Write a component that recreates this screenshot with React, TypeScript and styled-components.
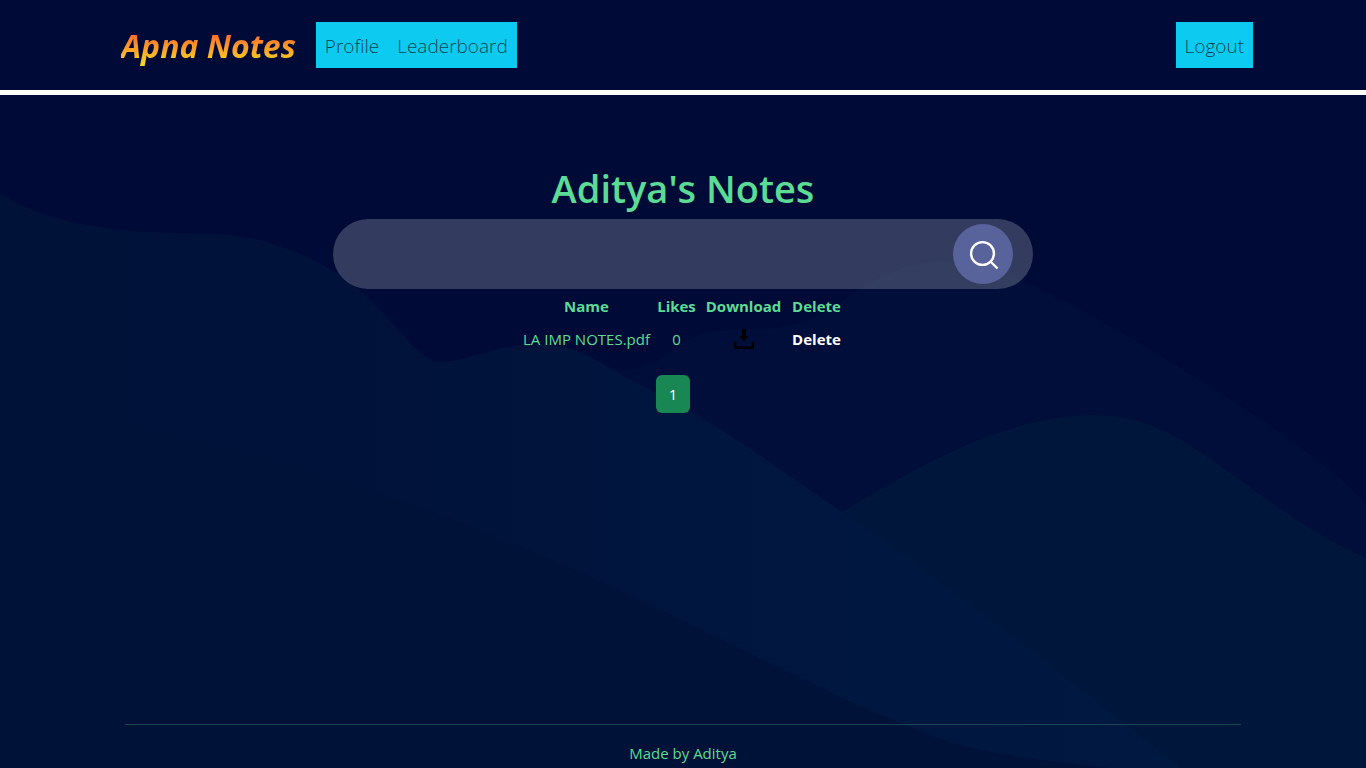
import React, { useState } from "react";
import styled, { createGlobalStyle } from "styled-components";

const GlobalStyle = createGlobalStyle`
  *, *::before, *::after { box-sizing: border-box; }
  body {
    margin: 0;
    background: #000a36;
    color: #5cdb95;
    font-family: "Open Sans", "Noto Sans", sans-serif;
    font-size: 15px;
    line-height: 24px;
  }
`;

const Page = styled.div`
  position: relative;
  isolation: isolate;
  min-height: 100vh;
  display: flex;
  flex-direction: column;
`;

const Backdrop = styled.svg`
  position: absolute;
  inset: 0;
  width: 100%;
  height: 100%;
  z-index: -1;
`;

const Header = styled.header`
  border-bottom: 5px solid #fff;
  padding: 22px 0;
`;

const Bar = styled.div`
  max-width: 1140px;
  margin: 0 auto;
  padding-left: 8px;
  display: flex;
  align-items: center;
`;

const Brand = styled.a`
  margin-right: 18px;
  padding: 2px 2px 0 0;
  font-size: 32px;
  line-height: 44px;
  font-weight: 700;
  font-style: italic;
  text-decoration: none;
  color: transparent;
  background: linear-gradient(#ff512f 10%, #f9d423 90%);
  -webkit-background-clip: text;
  background-clip: text;
`;

const Nav = styled.nav<{ $end?: boolean }>`
  display: flex;
  background: #0dcaf0;
  margin-left: ${(p) => (p.$end ? "auto" : "0")};
`;

const NavLink = styled.a`
  padding: 9px 9px 7px;
  font-size: 19px;
  line-height: 30px;
  font-weight: 300;
  color: rgba(0, 0, 0, 0.7);
  text-decoration: none;
`;

const Main = styled.main`
  flex: 1;
  padding-top: 69px;
  display: flex;
  flex-direction: column;
  align-items: center;
`;

const Title = styled.h1`
  margin: 0 0 7px;
  font-size: 38px;
  line-height: 48px;
  font-weight: 600;
`;

const SearchForm = styled.form`
  width: 100%;
  max-width: 700px;
  height: 70px;
  padding: 0 20px;
  display: flex;
  align-items: center;
  border-radius: 35px;
  background: rgba(255, 255, 255, 0.2);
`;

const SearchInput = styled.input`
  flex: 1;
  min-width: 0;
  border: 0;
  outline: 0;
  background: transparent;
  color: #fff;
  font: inherit;
  font-size: 20px;
`;

const SearchButton = styled.button`
  width: 60px;
  height: 60px;
  padding: 0;
  display: grid;
  place-items: center;
  border: 0;
  border-radius: 50%;
  background: #58629b;
  cursor: pointer;
`;

const NotesTable = styled.table`
  border-collapse: collapse;
  table-layout: fixed;
  width: 326px;
  text-align: center;
  white-space: nowrap;
`;

const HeadCell = styled.th<{ $width: number }>`
  width: ${(p) => p.$width}px;
  padding: 5px 0 6px;
  font-weight: 700;
`;

const Cell = styled.td`
  padding: 3px 0;
`;

const DownloadLink = styled.a`
  display: flex;
  justify-content: center;
  color: #000;
`;

const DeleteButton = styled.button`
  padding: 0;
  border: 0;
  background: none;
  color: #fff;
  font: inherit;
  font-weight: 700;
  cursor: pointer;
`;

const Pagination = styled.nav`
  margin: 21px 20px 0 0;
`;

const PageButton = styled.button`
  width: 34px;
  height: 38px;
  padding: 0;
  border: 0;
  border-radius: 6px;
  background: #198754;
  color: #fff;
  font: inherit;
  cursor: pointer;
`;

const Footer = styled.footer`
  width: 100%;
  max-width: 1116px;
  margin: 0 auto;
  padding: 16px 0 3px;
  border-top: 1px solid rgba(92, 219, 149, 0.25);
  text-align: center;
`;

const Waves = () => (
  <Backdrop viewBox="0 0 1366 768" preserveAspectRatio="none" aria-hidden="true">
    <defs>
      <linearGradient id="sea" x1="0" x2="1" y1="0" y2="0">
        <stop offset="0" stopColor="#001238" />
        <stop offset="0.3" stopColor="#001239" />
        <stop offset="0.6" stopColor="#00163e" />
        <stop offset="1" stopColor="#001941" />
      </linearGradient>
    </defs>
    <path
      fill="#000e39"
      d="M590 360C620 374 640 372 662 358C690 334 705 329 760 329C850 327 850 262 955 260C1000 264 1040 290 1100 320C1200 378 1310 446 1366 502V768H590Z"
    />
    <path
      fill="#00163a"
      d="M842 512C910 472 1000 415 1095 415C1190 415 1240 500 1366 558V768H842Z"
    />
    <path
      fill="url(#sea)"
      d="M0 194C60 231 140 233 215 234C270 236 335 262 375 305C405 335 422 362 441 362C465 362 500 344 540 344C590 346 600 368 656 393C720 424 780 470 842 512C960 594 1070 680 1180 768H0Z"
    />
    <path
      fill="#001238"
      d="M0 420C180 420 380 488 540 555C700 622 860 716 960 745C1010 758 1060 762 1110 768H0Z"
    />
  </Backdrop>
);

const SearchIcon = () => (
  <svg width="60" height="60" viewBox="0 0 60 60" fill="none" stroke="#fff" strokeWidth="2.4" aria-hidden="true">
    <circle cx="29.5" cy="29.5" r="11.4" />
    <path d="M37.5 37.5L44.5 44.5" />
  </svg>
);

const DownloadIcon = () => (
  <svg width="20" height="20" viewBox="0 0 20 20" fill="currentColor" aria-hidden="true">
    <path d="M8 0h4v7h2.500L10 12.500L5.500 7H8Z" />
    <path d="M0 13h2.500v4.500h15V13H20v5.500a1.500 1.500 0 0 1-1.500 1.500h-17A1.500 1.500 0 0 1 0 18.500Z" />
  </svg>
);

const notes = [{ name: "LA IMP NOTES.pdf", likes: 0 }];

export default function App() {
  const [query, setQuery] = useState("");

  return (
    <>
      <GlobalStyle />
      <Page>
        <Waves />
        <Header>
          <Bar>
            <Brand href="#">Apna Notes</Brand>
            <Nav aria-label="Main">
              <NavLink href="#profile">Profile</NavLink>
              <NavLink href="#leaderboard">Leaderboard</NavLink>
            </Nav>
            <Nav $end aria-label="Account">
              <NavLink href="#logout">Logout</NavLink>
            </Nav>
          </Bar>
        </Header>
        <Main>
          <Title>Aditya's Notes</Title>
          <SearchForm role="search" onSubmit={(e) => e.preventDefault()}>
            <SearchInput
              type="text"
              aria-label="Search notes"
              value={query}
              onChange={(e) => setQuery(e.target.value)}
            />
            <SearchButton type="submit" aria-label="Search">
              <SearchIcon />
            </SearchButton>
          </SearchForm>
          <NotesTable>
            <thead>
              <tr>
                <HeadCell $width={133}>Name</HeadCell>
                <HeadCell $width={47}>Likes</HeadCell>
                <HeadCell $width={87}>Download</HeadCell>
                <HeadCell $width={59}>Delete</HeadCell>
              </tr>
            </thead>
            <tbody>
              {notes.map((note) => (
                <tr key={note.name}>
                  <Cell>{note.name}</Cell>
                  <Cell>{note.likes}</Cell>
                  <Cell>
                    <DownloadLink href="#download" aria-label={`Download ${note.name}`}>
                      <DownloadIcon />
                    </DownloadLink>
                  </Cell>
                  <Cell>
                    <DeleteButton type="button">Delete</DeleteButton>
                  </Cell>
                </tr>
              ))}
            </tbody>
          </NotesTable>
          <Pagination aria-label="Pages">
            <PageButton type="button">1</PageButton>
          </Pagination>
        </Main>
        <Footer>Made by Aditya</Footer>
      </Page>
    </>
  );
}
